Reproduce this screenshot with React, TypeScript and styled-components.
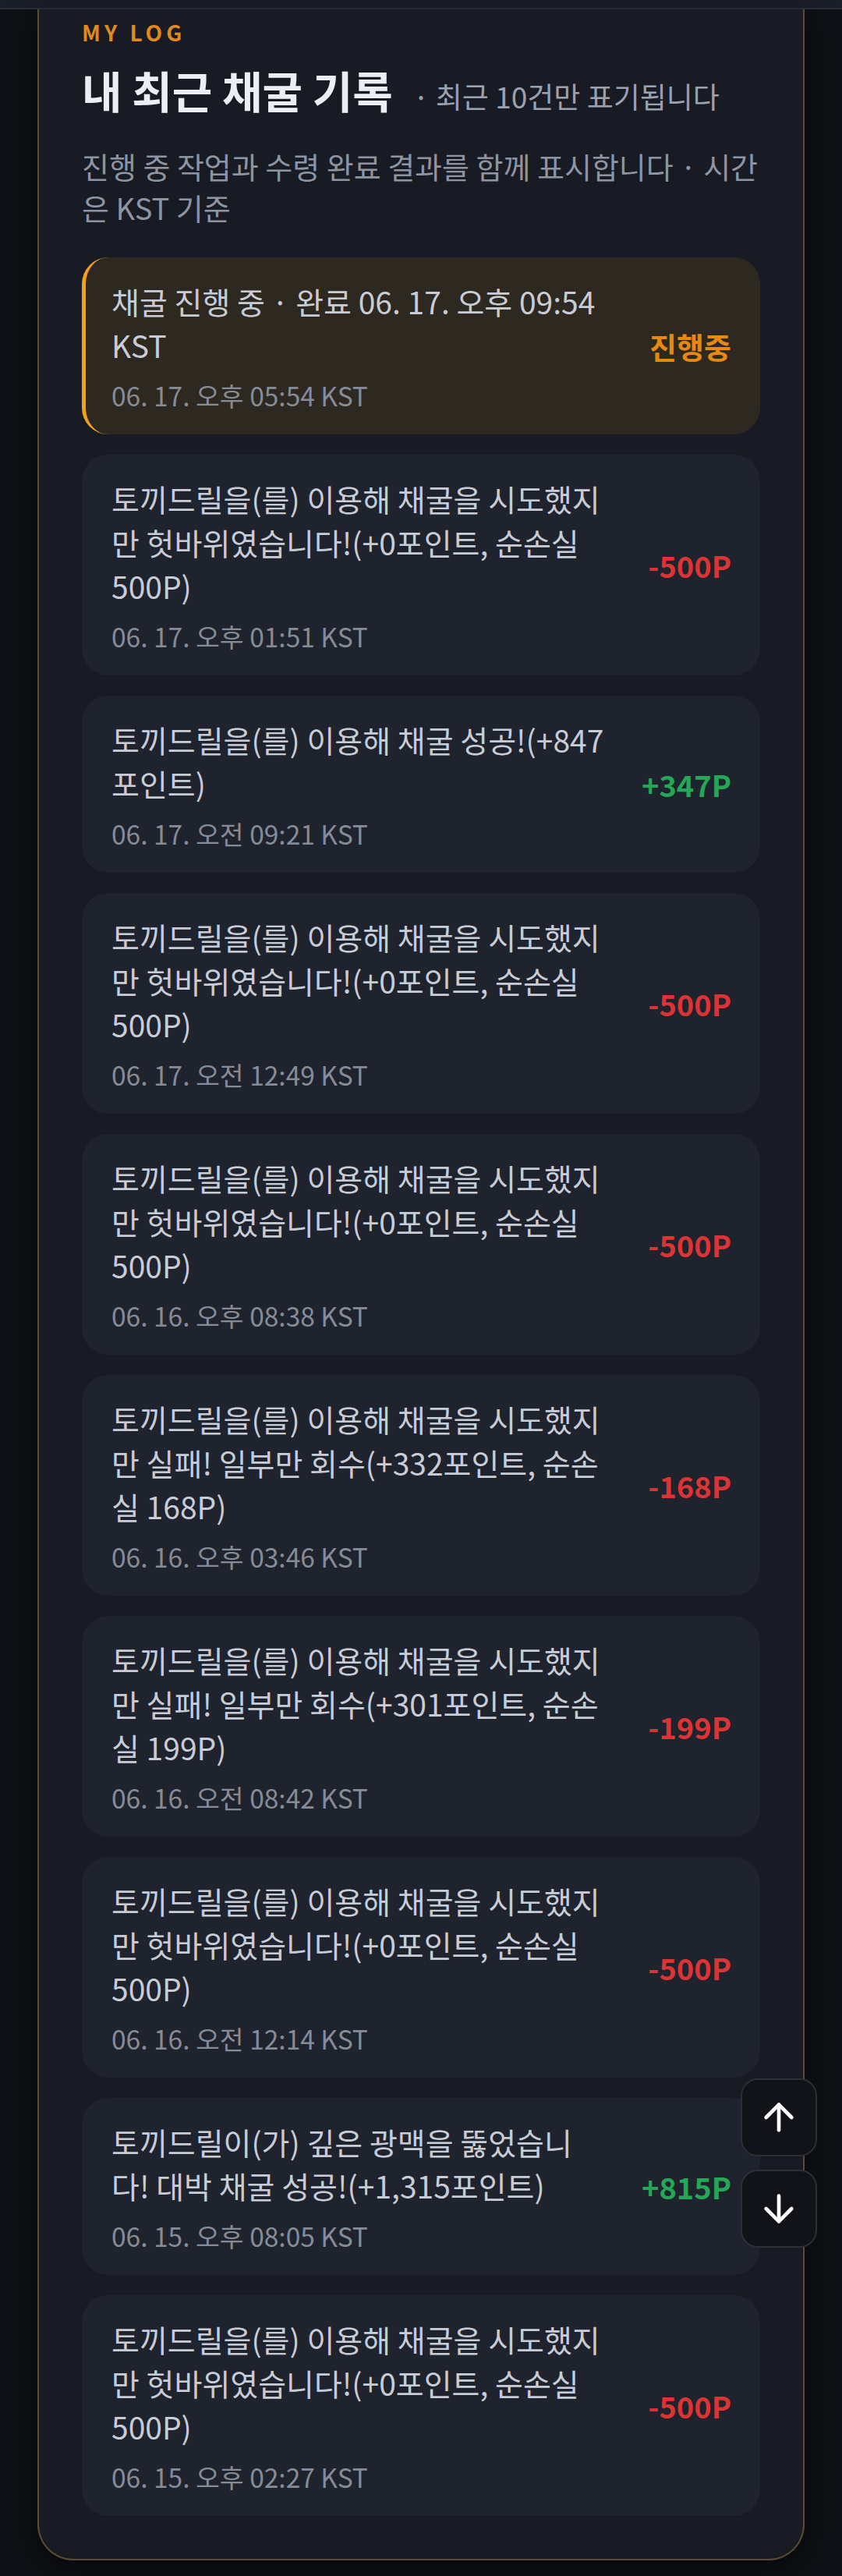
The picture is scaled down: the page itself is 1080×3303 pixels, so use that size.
import React from 'react';
import styled, { createGlobalStyle } from 'styled-components';
import { ArrowUp, ArrowDown } from 'lucide-react';

const GlobalStyle = createGlobalStyle`
  html, body {
    margin: 0;
    padding: 0;
    background: #0e1015;
    overflow: hidden;
  }
  body {
    font-family: "Noto Sans CJK KR", "Noto Sans", sans-serif;
  }
`;

const Page = styled.div`
  min-height: 3303px;
  display: flex;
  flex-direction: column;
  background: #0e1015;
`;

const TopBar = styled.div`
  height: 10px;
  background: #1a1e28;
  border-bottom: 2px solid #2a2f3b;
`;

const LogCard = styled.section`
  margin: 0 48px;
  padding: 12px 55px 55px;
  background: #181b23;
  border: 2px solid #5a4c33;
  border-top: none;
  border-radius: 0 0 46px 46px;
  box-shadow: 0 10px 40px rgba(0, 0, 0, 0.5);
`;

const Eyebrow = styled.div`
  font-size: 28px;
  line-height: 34px;
  font-weight: 700;
  letter-spacing: 5px;
  color: #e08a1c;
`;

const TitleRow = styled.div`
  display: flex;
  align-items: baseline;
  gap: 26px;
  margin-top: 20px;
`;

const Title = styled.h2`
  margin: 0;
  font-size: 56px;
  line-height: 73px;
  font-weight: 700;
  color: #eceef5;
`;

const Note = styled.span`
  font-size: 37px;
  color: #9ba1ae;
`;

const Description = styled.p`
  margin: 35px 0 0;
  font-size: 38px;
  line-height: 53px;
  color: #8e94a2;
`;

const List = styled.ul`
  list-style: none;
  margin: 38px 0 0;
  padding: 0;
  display: flex;
  flex-direction: column;
  gap: 26px;
`;

const Item = styled.li<{ $active?: boolean }>`
  display: grid;
  grid-template-columns: minmax(0, 1fr) 120px;
  column-gap: 36px;
  align-items: center;
  padding: 28px 37px 28px ${(p) => (p.$active ? '33px' : '38px')};
  border-radius: 34px;
  background: ${(p) => (p.$active ? '#2d2820' : '#1f232e')};
  border-left: ${(p) => (p.$active ? '5px solid #f2a01e' : 'none')};
`;

const ItemBody = styled.div`
  display: flex;
  flex-direction: column;
  gap: 14px;
`;

const Message = styled.div`
  font-size: 39px;
  line-height: 56px;
  color: #c8ccd6;
`;

const Stamp = styled.div`
  font-size: 33.5px;
  line-height: 45px;
  color: #868b98;
`;

const Amount = styled.div<{ $tone: 'loss' | 'gain' | 'pending' }>`
  text-align: right;
  font-size: 38px;
  font-weight: 700;
  color: ${(p) => (p.$tone === 'loss' ? '#dc3434' : p.$tone === 'gain' ? '#23a955' : '#e8890f')};
`;

const ScrollButtons = styled.div`
  position: fixed;
  right: 32px;
  bottom: 421px;
  display: flex;
  flex-direction: column;
  gap: 17px;
`;

const ScrollButton = styled.button`
  width: 98px;
  height: 100px;
  display: flex;
  align-items: center;
  justify-content: center;
  padding: 0;
  border-radius: 22px;
  border: 2px solid #2c2f36;
  background: #111318;
  color: #ffffff;
`;

type Entry = {
  text: string;
  time: string;
  amount: string;
  tone: 'loss' | 'gain' | 'pending';
  active?: boolean;
};

const FAIL = '토끼드릴을(를) 이용해 채굴을 시도했지만 헛바위였습니다!(+0포인트, 순손실 500P)';

const entries: Entry[] = [
  { text: '채굴 진행 중 · 완료 06. 17. 오후 09:54 KST', time: '06. 17. 오후 05:54 KST', amount: '진행중', tone: 'pending', active: true },
  { text: FAIL, time: '06. 17. 오후 01:51 KST', amount: '-500P', tone: 'loss' },
  { text: '토끼드릴을(를) 이용해 채굴 성공!(+847포인트)', time: '06. 17. 오전 09:21 KST', amount: '+347P', tone: 'gain' },
  { text: FAIL, time: '06. 17. 오전 12:49 KST', amount: '-500P', tone: 'loss' },
  { text: FAIL, time: '06. 16. 오후 08:38 KST', amount: '-500P', tone: 'loss' },
  { text: '토끼드릴을(를) 이용해 채굴을 시도했지만 실패! 일부만 회수(+332포인트, 순손실 168P)', time: '06. 16. 오후 03:46 KST', amount: '-168P', tone: 'loss' },
  { text: '토끼드릴을(를) 이용해 채굴을 시도했지만 실패! 일부만 회수(+301포인트, 순손실 199P)', time: '06. 16. 오전 08:42 KST', amount: '-199P', tone: 'loss' },
  { text: FAIL, time: '06. 16. 오전 12:14 KST', amount: '-500P', tone: 'loss' },
  { text: '토끼드릴이(가) 깊은 광맥을 뚫었습니다! 대박 채굴 성공!(+1,315포인트)', time: '06. 15. 오후 08:05 KST', amount: '+815P', tone: 'gain' },
  { text: FAIL, time: '06. 15. 오후 02:27 KST', amount: '-500P', tone: 'loss' },
];

export default function App() {
  return (
    <>
      <GlobalStyle />
      <Page>
        <TopBar />
        <LogCard>
          <Eyebrow>MY LOG</Eyebrow>
          <TitleRow>
            <Title>내 최근 채굴 기록</Title>
            <Note>· 최근 10건만 표기됩니다</Note>
          </TitleRow>
          <Description>진행 중 작업과 수령 완료 결과를 함께 표시합니다 · 시간은 KST 기준</Description>
          <List>
            {entries.map((e, i) => (
              <Item key={i} $active={e.active}>
                <ItemBody>
                  <Message>{e.text}</Message>
                  <Stamp>{e.time}</Stamp>
                </ItemBody>
                <Amount $tone={e.tone}>{e.amount}</Amount>
              </Item>
            ))}
          </List>
        </LogCard>
      </Page>
      <ScrollButtons>
        <ScrollButton aria-label="맨 위로">
          <ArrowUp size={56} strokeWidth={2} />
        </ScrollButton>
        <ScrollButton aria-label="맨 아래로">
          <ArrowDown size={56} strokeWidth={2} />
        </ScrollButton>
      </ScrollButtons>
    </>
  );
}
